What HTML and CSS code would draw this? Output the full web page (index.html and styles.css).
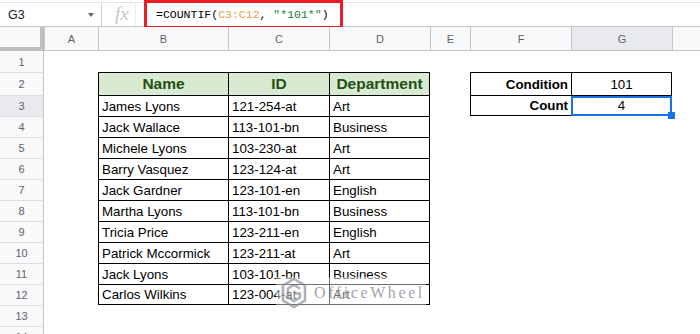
FILE: index.html
```html
<!DOCTYPE html>
<html lang="en">
<head>
    <meta charset="UTF-8">
    <title>COUNTIF Sheet</title>
    <link rel="stylesheet" href="styles.css">
</head>
<body>
    <div class="formula-bar">
        <div class="name-box">G3<span class="caret"></span></div>
        <div class="fx">fx</div>
        <div class="formula">=COUNTIF(<span class="ref">C3:C12</span>, <span class="str">"*101*"</span>)</div>
    </div>
    <div class="mark-box"></div>

    <div class="sheet">
        <div class="row head">
            <div class="corner"></div>
            <div class="ch">A</div><div class="ch">B</div><div class="ch">C</div><div class="ch">D</div>
            <div class="ch">E</div><div class="ch">F</div><div class="ch sel">G</div><div class="ch"></div>
        </div>
        <div class="row r1">
            <div class="rh first">1</div>
            <div></div><div></div><div></div><div></div><div></div><div></div><div></div><div></div>
        </div>
        <div class="row r2">
            <div class="rh">2</div>
            <div></div>
            <div class="t hd">Name</div><div class="t hd">ID</div><div class="t hd end">Department</div>
            <div></div>
            <div class="t lbl">Condition</div><div class="t mid end">101</div>
            <div></div>
        </div>
        <div class="row">
            <div class="rh sel">3</div>
            <div></div>
            <div class="t">James Lyons</div><div class="t">121-254-at</div><div class="t end">Art</div>
            <div></div>
            <div class="t lbl foot">Count</div><div class="t mid end foot active">4</div>
            <div></div>
        </div>
        <div class="row">
            <div class="rh">4</div>
            <div></div>
            <div class="t">Jack Wallace</div><div class="t">113-101-bn</div><div class="t end">Business</div>
            <div></div><div></div><div></div><div></div>
        </div>
        <div class="row">
            <div class="rh">5</div>
            <div></div>
            <div class="t">Michele Lyons</div><div class="t">103-230-at</div><div class="t end">Art</div>
            <div></div><div></div><div></div><div></div>
        </div>
        <div class="row">
            <div class="rh">6</div>
            <div></div>
            <div class="t">Barry Vasquez</div><div class="t">123-124-at</div><div class="t end">Art</div>
            <div></div><div></div><div></div><div></div>
        </div>
        <div class="row">
            <div class="rh">7</div>
            <div></div>
            <div class="t">Jack Gardner</div><div class="t">123-101-en</div><div class="t end">English</div>
            <div></div><div></div><div></div><div></div>
        </div>
        <div class="row">
            <div class="rh">8</div>
            <div></div>
            <div class="t">Martha Lyons</div><div class="t">113-101-bn</div><div class="t end">Business</div>
            <div></div><div></div><div></div><div></div>
        </div>
        <div class="row">
            <div class="rh">9</div>
            <div></div>
            <div class="t">Tricia Price</div><div class="t">123-211-en</div><div class="t end">English</div>
            <div></div><div></div><div></div><div></div>
        </div>
        <div class="row">
            <div class="rh">10</div>
            <div></div>
            <div class="t">Patrick Mccormick</div><div class="t">123-211-at</div><div class="t end">Art</div>
            <div></div><div></div><div></div><div></div>
        </div>
        <div class="row">
            <div class="rh">11</div>
            <div></div>
            <div class="t">Jack Lyons</div><div class="t">103-101-bn</div><div class="t end">Business</div>
            <div></div><div></div><div></div><div></div>
        </div>
        <div class="row">
            <div class="rh">12</div>
            <div></div>
            <div class="t foot">Carlos Wilkins</div><div class="t foot">123-004-at</div><div class="t end foot">Art</div>
            <div></div><div></div><div></div><div></div>
        </div>
        <div class="row">
            <div class="rh">13</div>
            <div></div><div></div><div></div><div></div><div></div><div></div><div></div><div></div>
        </div>
        <div class="row">
            <div class="rh">14</div>
            <div></div><div></div><div></div><div></div><div></div><div></div><div></div><div></div>
        </div>

        <div class="watermark">
            <svg width="28" height="32" viewBox="0 0 28 32">
                <path d="M14 2 L25 8.5 L25 23.5 L14 30 L3 23.5 L3 8.5 Z" fill="none" stroke="#9aa0a6" stroke-width="2.6"/>
                <path d="M20 11.5 L14 8 L8 11.5 L8 20.5 L14 24 L20 20.5 L20 16.5 L14 16.5" fill="none" stroke="#9aa0a6" stroke-width="2.6"/>
            </svg>
            <span>OfficeWheel</span>
        </div>
    </div>
</body>
</html>
```

FILE: styles.css
```css
* {
    box-sizing: border-box;
}
body {
    margin: 0;
    background: white;
    font-family: "Liberation Sans", Arial, sans-serif;
    overflow: hidden;
    height: 334px;
}

/* formula bar */
.formula-bar {
    display: flex;
    align-items: center;
    margin-top: 2px;
    height: 25px;
    border-top: 1px solid #e3e3e3;
    border-bottom: 1px solid #c4c7c5;
}
.name-box {
    position: relative;
    width: 102px;
    height: 100%;
    padding-left: 8px;
    display: flex;
    align-items: center;
    font-size: 12.5px;
    color: #202124;
    border-right: 1px solid #d0d0d0;
}
.caret {
    position: absolute;
    left: 88px;
    top: 10px;
    border-left: 3.5px solid transparent;
    border-right: 3.5px solid transparent;
    border-top: 4px solid #666;
}
.fx {
    width: 34px;
    height: 100%;
    padding-left: 13px;
    font-family: "Liberation Serif", serif;
    font-style: italic;
    font-size: 19px;
    line-height: 22px;
    color: #c4c4c4;
    border-right: 1px solid #ececec;
}
.formula {
    margin-left: 20px;
    font-family: "Liberation Mono", monospace;
    font-size: 11.5px;
    color: #000;
}
.ref {
    color: #f19b4a;
}
.str {
    color: #188038;
}
.mark-box {
    position: absolute;
    left: 144px;
    top: 0;
    width: 199px;
    height: 29px;
    border: 3px solid #ed1c24;
}

/* grid */
.sheet {
    position: relative;
}
.row {
    display: grid;
    grid-template-columns: 44px 54px 130px 101px 101px 40px 101px 101px 28px;
    height: 21px;
}
.row.head {
    height: 24px;
}
.row.r2 {
    height: 23px;
}
.row > div {
    display: flex;
    align-items: center;
    white-space: nowrap;
    overflow: visible;
}
.corner {
    background: #f8f9fa;
    border-right: 4px solid #c0c0c0;
    border-bottom: 4px solid #c0c0c0;
}
.row > .ch {
    justify-content: center;
    background: #f8f9fa;
    border-left: 1px solid #c4c7c5;
    border-bottom: 1px solid #c4c7c5;
    font-size: 11px;
    color: #5f6368;
}
.row > .rh {
    justify-content: center;
    background: #f8f9fa;
    border-right: 1px solid #c4c7c5;
    border-top: 1px solid #dadce0;
    font-size: 11px;
    color: #5f6368;
}
.row > .rh.first {
    border-top: none;
}
.row > .sel {
    background: #e8eaed;
}

/* data tables */
.row > .t {
    border-top: 1px solid #000;
    border-left: 1px solid #000;
    padding: 0 3px;
    font-size: 13.33px;
    color: #000;
}
.row > .t.end {
    border-right: 1px solid #000;
}
.row > .t.foot {
    border-bottom: 1px solid #000;
}
.row > .hd {
    justify-content: center;
    background: #d9ead3;
    color: #274e13;
    font-weight: bold;
    font-size: 15.5px;
}
.row > .lbl {
    justify-content: flex-end;
    font-weight: bold;
}
.row > .mid {
    justify-content: center;
}
.row > .active {
    position: relative;
}
.active::before {
    content: "";
    position: absolute;
    top: 0;
    left: -1px;
    right: -1px;
    bottom: -1px;
    border: 2px solid #1a73e8;
}
.active::after {
    content: "";
    position: absolute;
    right: -4px;
    bottom: -4px;
    width: 7px;
    height: 7px;
    background: #1a73e8;
}

/* watermark */
.watermark {
    position: absolute;
    left: 276px;
    top: 250px;
    width: 150px;
    height: 32px;
    display: flex;
    align-items: center;
    gap: 6px;
    padding-left: 4px;
    background: rgba(255, 255, 255, 0.55);
    opacity: 0.8;
}
.watermark span {
    font-family: "Liberation Serif", serif;
    font-size: 16px;
    letter-spacing: 2.6px;
    color: #8a8f94;
}
```
